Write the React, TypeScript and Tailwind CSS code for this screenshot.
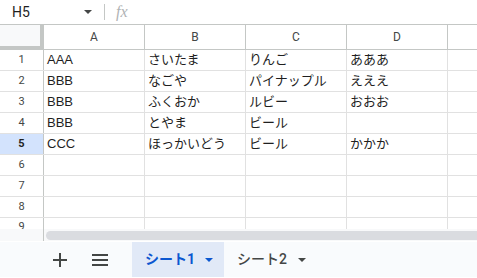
const rows: string[][] = [
  ["AAA", "さいたま", "りんご", "あああ"],
  ["BBB", "なごや", "パイナップル", "えええ"],
  ["BBB", "ふくおか", "ルビー", "おおお"],
  ["BBB", "とやま", "ビール", ""],
  ["CCC", "ほっかいどう", "ビール", "かかか"],
  ["", "", "", ""],
  ["", "", "", ""],
  ["", "", "", ""],
];

const font = "font-['Roboto','Noto_Sans_CJK_JP',sans-serif]";
const cols = "grid grid-cols-[44px_101px_101px_101px_101px_1fr]";

function Caret({ className }: { className: string }) {
  return (
    <svg className={className} width="8" height="4" viewBox="0 0 8 4">
      <path d="M0 0h8L4 4z" fill="currentColor" />
    </svg>
  );
}

function FormulaBar() {
  return (
    <div className="flex h-[25px] items-center border-b border-[#c4c7c5] bg-white">
      <div className="flex w-[104px] items-center pl-[12px] pr-[12px]">
        <span className="flex-1 text-[14px] text-[#1f1f1f]">H5</span>
        <Caret className="text-[#444746]" />
      </div>
      <div className="h-[16px] w-px bg-[#c4c7c5]" />
      <span className="ml-[11px] font-['Liberation_Serif',serif] text-[16px] italic text-[#b0b3b5]">fx</span>
    </div>
  );
}

function HeaderRow() {
  return (
    <div className={`${cols} h-[25px] border-b border-[#c4c7c5] text-[12px] text-[#444746]`}>
      <div className="-mb-px border-b-[4px] border-r-[4px] border-[#c4c7c5] bg-[#f8f9fa]" />
      {["A", "B", "C", "D"].map((c) => (
        <div key={c} className="flex items-center justify-center border-r border-[#c4c7c5]">
          {c}
        </div>
      ))}
      <div />
    </div>
  );
}

function Row({ n, cells }: { n: number; cells: string[] }) {
  const sel = n === 5;
  return (
    <div className={`${cols} h-[21px] border-b border-[#e1e1e1]`}>
      <div
        className={`flex items-center justify-center border-r border-[#c4c7c5] text-[11px] ${
          sel ? "bg-[#d3e3fd] font-bold text-[#1f1f1f]" : "text-[#444746]"
        }`}
      >
        {n}
      </div>
      {cells.map((c, i) => (
        <div
          key={i}
          className="flex items-center border-r border-[#e1e1e1] px-[3px] font-['Liberation_Sans','Noto_Sans_CJK_JP',sans-serif] text-[13px] text-[#1f1f1f]"
        >
          {c}
        </div>
      ))}
      <div />
    </div>
  );
}

function ScrollRow() {
  return (
    <div className="flex h-[12px] bg-[#f8f9fa]">
      <div className="w-[44px] border-r border-[#c4c7c5]" />
      <div className="flex flex-1 items-center pl-[2px]">
        <div className="h-[9px] flex-1 rounded-l-full bg-[#dadce0]" />
      </div>
    </div>
  );
}

function TabBar() {
  return (
    <div className="flex h-[36px] items-stretch border-t border-white bg-[#f9fbfd]">
      <div className="flex w-[132px] items-center pl-[53px]">
        <svg width="14" height="14" viewBox="0 0 14 14">
          <path d="M6 0h2v6h6v2H8v6H6V8H0V6h6z" fill="#444746" />
        </svg>
        <svg className="ml-[25px]" width="16" height="12" viewBox="0 0 16 12">
          <path d="M0 0h16v2H0zM0 5h16v2H0zM0 10h16v2H0z" fill="#444746" />
        </svg>
      </div>
      <div className="flex w-[92px] items-center bg-[#e1e9f7] pl-[13px]">
        <span className="text-[14px] font-bold text-[#0b57d0]">シート1</span>
        <Caret className="ml-[10px] text-[#0b57d0]" />
      </div>
      <div className="flex items-center pl-[13px]">
        <span className="text-[14px] font-medium text-[#444746]">シート2</span>
        <Caret className="ml-[11px] text-[#444746]" />
      </div>
    </div>
  );
}

export default function App() {
  return (
    <div className={`${font} flex h-[278px] w-[477px] flex-col overflow-hidden bg-white`}>
      <FormulaBar />
      <HeaderRow />
      {rows.map((r, i) => (
        <Row key={i} n={i + 1} cells={r} />
      ))}
      <div className={`${cols} h-[11px] overflow-hidden`}>
        <div className="flex justify-center border-r border-[#c4c7c5] pt-[3px] text-[11px] leading-[11px] text-[#444746]">
          9
        </div>
        {[0, 1, 2, 3].map((i) => (
          <div key={i} className="border-r border-[#e1e1e1]" />
        ))}
        <div />
      </div>
      <ScrollRow />
      <TabBar />
    </div>
  );
}
